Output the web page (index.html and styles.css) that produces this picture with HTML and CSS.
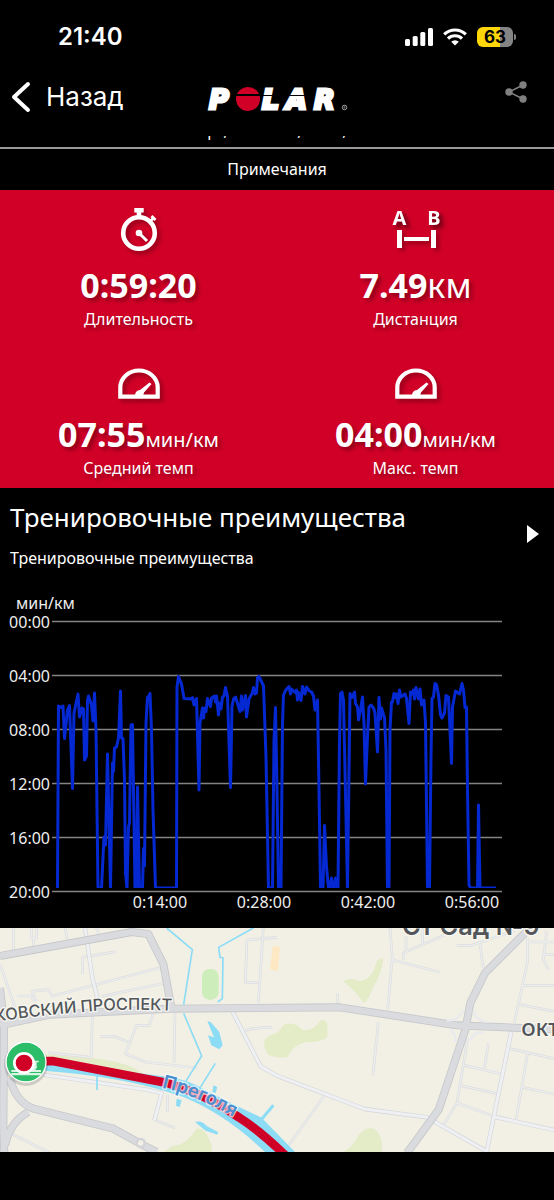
FILE: index.html
```
<!DOCTYPE html>
<html lang="ru">

<head>
  <meta charset="UTF-8">
  <meta name="viewport" content="width=device-width, initial-scale=1.0">
  <title>Тренировка</title>
  <link rel="stylesheet" href="styles.css">
</head>

<body>
  <div class="status-bar">
    <span class="time">21:40</span>
    <div class="status-icons">
      <svg width="28" height="18" viewBox="0 0 28 18" fill="#fff">
        <rect x="0" y="11" width="5" height="7" rx="1.5" />
        <rect x="7.7" y="8" width="5" height="10" rx="1.5" />
        <rect x="15.3" y="4" width="5" height="14" rx="1.5" />
        <rect x="23" y="0" width="5" height="18" rx="1.5" />
      </svg>
      <svg width="24" height="18" viewBox="0 0 24 18" fill="none" stroke="#fff" stroke-width="3.2">
        <path d="M1.2 6.4a15.4 15.4 0 0 1 21.6 0" />
        <path d="M5 10.6a10 10 0 0 1 14 0" />
        <path d="M12 17.6l-3.8-3.9a5.4 5.4 0 0 1 7.6 0z" fill="#fff" stroke="none" />
      </svg>
      <div class="battery"><span>63</span></div>
    </div>
  </div>

  <header class="nav">
    <button type="button" class="back">
      <svg width="20" height="32" viewBox="0 0 20 32" fill="none" stroke="#fff" stroke-width="4" stroke-linecap="round" stroke-linejoin="round">
        <path d="M17 3L3 16l14 13" />
      </svg>
      Назад
    </button>
    <svg class="logo" width="144" height="26" viewBox="0 0 144 26" role="img" aria-label="Polar">
      <g class="logo-text">
        <text x="4" y="23">P</text>
        <text x="57" y="23">L</text>
        <text x="81" y="23">A</text>
        <text x="109" y="23">R</text>
      </g>
      <circle cx="43" cy="13" r="12" fill="#d10027" />
      <rect x="30" y="8" width="26" height="2" fill="#000" />
      <rect x="56" y="9" width="50" height="1" fill="#000" />
      <circle cx="139.500" cy="21.500" r="2.300" fill="none" stroke="#999" />
      <path d="M139 22.800v-2.500h1v2.500" fill="none" stroke="#999" stroke-width=".6" />
    </svg>
    <button type="button" class="share" aria-label="Поделиться">
      <svg width="22" height="22" viewBox="0 0 22 22" fill="#808080">
        <path d="M18 4L4 11l14 7" fill="none" stroke="#808080" stroke-width="1.5" />
        <circle cx="18" cy="4" r="3.700" />
        <circle cx="4" cy="11" r="3.700" />
        <circle cx="18" cy="18" r="3.700" />
      </svg>
    </button>
  </header>

  <main>
    <div class="date">Четверг, Июль 10, 2025, 20:36</div>
    <div class="notes">Примечания</div>

    <section class="metrics">
      <div class="metric">
        <svg class="metric-icon" width="44" height="44" viewBox="0 0 44 44">
          <circle cx="22" cy="26" r="15.800" fill="none" stroke="#fff" stroke-width="4.600" />
          <path d="M17.300 1h9.400v4.600h-2.400V9h-4.600V5.600h-2.400z" fill="#fff" />
          <path d="M32.500 13l2-2-1-1 2-2 4 4-2 2-1-1-2 2z" fill="#fff" />
          <circle cx="22" cy="26" r="3.300" fill="#fff" />
          <path d="M22 26l8 8" stroke="#fff" stroke-width="3" />
        </svg>
        <div class="value">0:59:20</div>
        <div class="label">Длительность</div>
      </div>
      <div class="metric">
        <svg class="metric-icon" width="50" height="44" viewBox="0 0 50 44" fill="#fff">
          <text class="ab" x="8.500" y="18" text-anchor="middle">A</text>
          <text class="ab" x="43" y="18" text-anchor="middle">B</text>
          <path d="M6 23h5v18H6zM40 23h5v18h-5zM13 30h25v4H13z" />
        </svg>
        <div class="value">7.49<span class="unit-big">км</span></div>
        <div class="label">Дистанция</div>
      </div>
      <div class="metric">
        <svg class="metric-icon" width="44" height="44" viewBox="0 0 44 44">
          <path d="M3.300 40.700V31.500a18.700 17 0 0 1 37.400 0v9.200z" fill="none" stroke="#fff" stroke-width="4.200" />
          <path d="M18 40c0-4 2-5.500 5-6l9.500-7.500 2 1.500-7.500 8.500-1 3.500z" fill="#fff" />
        </svg>
        <div class="value">07:55<span class="unit">мин/км</span></div>
        <div class="label">Средний темп</div>
      </div>
      <div class="metric">
        <svg class="metric-icon" width="44" height="44" viewBox="0 0 44 44">
          <path d="M3.300 40.700V31.500a18.700 17 0 0 1 37.400 0v9.200z" fill="none" stroke="#fff" stroke-width="4.200" />
          <path d="M18 40c0-4 2-5.500 5-6l9.500-7.500 2 1.500-7.500 8.500-1 3.500z" fill="#fff" />
        </svg>
        <div class="value">04:00<span class="unit">мин/км</span></div>
        <div class="label">Макс. темп</div>
      </div>
    </section>

    <section class="benefit">
      <div>
        <h2>Тренировочные преимущества</h2>
        <p>Тренировочные преимущества</p>
      </div>
      <button type="button" class="play" aria-label="Открыть">
        <svg width="12" height="18" viewBox="0 0 12 18"><path d="M0 0l12 9-12 9z" fill="#fff" /></svg>
      </button>
    </section>

    <svg class="chart" viewBox="0 0 554 338" role="img" aria-label="Темп">
      <path d="M52 31.500H502M52 85.500H502M52 139.500H502M52 193.500H502M52 247.500H502M52 301.500H502" stroke="#848484" stroke-width="1.500" />
      <g class="chart-labels">
        <text x="16" y="19">мин/км</text>
        <text x="50" y="38" text-anchor="end">00:00</text>
        <text x="50" y="92" text-anchor="end">04:00</text>
        <text x="50" y="146" text-anchor="end">08:00</text>
        <text x="50" y="200" text-anchor="end">12:00</text>
        <text x="50" y="254" text-anchor="end">16:00</text>
        <text x="50" y="308" text-anchor="end">20:00</text>
        <text x="160" y="318" text-anchor="middle">0:14:00</text>
        <text x="264" y="318" text-anchor="middle">0:28:00</text>
        <text x="368" y="318" text-anchor="middle">0:42:00</text>
        <text x="472" y="318" text-anchor="middle">0:56:00</text>
      </g>
      <clipPath id="plot"><rect x="52" y="0" width="450" height="298" /></clipPath>
      <polyline clip-path="url(#plot)" fill="none" stroke="#0428d2" stroke-width="3" stroke-linejoin="round" points="
        57.5,298 58.5,116 61,117.5 63,116 64.5,148.5 67.5,120 69.5,115.5 72.5,198.5 74,123 78,104 79.5,127 82,118 83.5,119
        84.5,170 86.5,166 87.5,110 88.5,106 91.5,115 93,131 94.5,103 96,140 98,298 101.5,298 104,247 105.5,255 107.5,164
        110.5,298 112.5,173 113.5,181.5 114.5,158 116.5,157 118.5,148 120.5,101 121.5,148 123,148.5 124.5,190 125.5,283
        127,298 128.5,237 129.5,233 131,135 132.5,134.5 135,298 136.5,298 137.5,197 139.5,298 142.5,298 143.5,258.5
        144.5,276 146,133 147.5,107 148.5,107 150,103.5 151.5,140 153,220 155.5,298 176.5,298 177,97 178.5,86.5 181.5,94
        184,108.5 191.5,109 192.5,107.5 194,115 196.5,108.5 199,200 200,133 202.5,118 203.5,128 204.5,118 206,121.5
        207.5,108.5 210.5,116.5 211.5,108 214.5,106 215.5,112 216.5,106 218.5,125 219.5,113 221,119 222.5,107 224,106
        225.5,97.5 227.5,106 230.5,197.5 232,116.5 233.5,109 235.5,107 240,121.5 241.5,106 242.5,120 245.5,105.5
        246.5,127 249,109 252.5,102.5 253.5,97.5 255,104 256.5,103 257.5,87.5 259,86.5 263.5,96 266,167 268.5,298
        272.5,298 274,150 275.5,117.5 277,200 278.5,298 281,298 282.5,133 283.5,105 285.5,100.5 289,96.5 290.5,104
        291.5,99 295,102.5 296.5,100 297.5,110 298.5,102.5 301,110.5 302.5,96.5 305,104 306.5,97 309.5,101 311.5,102
        313.5,106 315,120 316.5,119 317.5,110 319,200 320.5,298 323,298 324.5,235.5 326.5,277 328.5,298 330,298
        331.5,288 332.5,298 334,297 335.5,288 337,298 338,298 339.5,150 340.5,103.5 342,102 343.5,110 347.5,298
        350,103.5 352,107.5 354.5,102 355.5,113.5 357.5,117 358.5,130 360.5,120 362.5,107 364,133 365.5,194 367.5,147
        369,117 371,115 373.5,118 375,123 377.5,162 379,107.5 380.5,129 381.5,118 384.5,128 386,160 387.5,298 389,298
        390,140 391.5,112 392.5,112 394,103.5 395.5,107.5 396.5,104 398,113.5 399.5,100 401,107 405,104 406.5,108.5
        409,133.5 410.5,102 412,104 413.5,100 414.5,109 416,97.5 418.5,109 420,99 421.5,115 424,110 425.5,133 427.5,298
        429.5,298 431,167 432,108.5 433.5,107 435,93.5 436.5,94.5 438.5,105 440.5,125 442,128 444.5,123 446,105.5
        448.5,107 451.5,173.5 452.5,117 455.5,101 459.5,104 462,93.5 463.5,100 465,117.5 466.5,117 467.5,200 469,295
        470.5,298 477.5,298 478.5,215 480,298 496,298" />
    </svg>

    <svg class="map" viewBox="0 0 1662 672" role="img" aria-label="Карта">
      <defs>
        <path id="avenue" d="M-131 297Q110 262 250 252Q380 239 580 252" />
        <path id="river" d="M485 480Q600 502 740 592" />
      </defs>
      <rect width="1662" height="672" fill="#f2f0e4" />

      <!-- parks -->
      <g fill="#e3ebc7">
        <path d="M1030 160q20-15 50 0 40-8 50-60 15-15 20-5-12 60-30 80-15 45-28 50-25-35-62-65z" />
        <path d="M792 340q10-20 40-25l20-25q30-12 55 15 30 8 55-28 20-5 20 20v30q-15 15-60 15-40 5-60 45-25 5-55-5-15-15-15-42z" />
        <path d="M490 672l30-20q30 5 70-50 25-5 45 50v20zM1030 672q30-15 45-50 25-30 50-18 25 20 20 68z" />
        <path d="M10 370q120 10 260 20 120 10 170 55L150 430z" />
      </g>
      <rect x="606" y="123" width="50" height="92" rx="22" fill="#cdeebb" />
      <path d="M818 54l22 2-6 74-24-6z" fill="#fde8c4" />

      <!-- small streets -->
      <g class="street-edge">
        <path id="small" d="M40 0v70M95 0v30h15V0M100 30v30M195 0l8 40M290 0l5 20M0 108l45 130M52 204h42l8 14M110 220l-15-30 50-5 12 20 328-87M305 205l190-40M248 138V88l100-17M277 255l-3 133-130-14M300 325h42l48 20M460 255l-12 37h-38l-34 85 60 25 156 18M525 255l-3 150M790 0l-15 225M831 28l-90 8-5 128h40M735 310q20-12 80-12M502 500v52M30 615l120 60M465 575l60 25M1170 0l7 90-14 155M1177 95l142 38M1218 25v50M1210 95v-20l150-65M1268 0v50M1370 52h45l130-45M1440 50l10 70M1583 30v70l-40 185M1583 42h79M1640 10l-10 85 15 30M1632 80h30M1013 196v40M1135 282l-16 160M972 505L862 658M1403 330l-32 195-40 65M1393 412l113 26M1382 473l110 24M1371 525l110 40M1465 345l-12 78M1530 362l132 30M1583 375l-35 202M1568 478l94 20M1560 230l102 20M1563 173h99" />
      </g>
      <use href="#small" class="street" />

      <!-- medium streets -->
      <g class="mid-edge">
        <path id="mid" d="M255 0l22 150 18 70M130 440l310 45 45 10-22 82M697 250l85 165 49 28 262 100 188 25 182 104M1535 305l-75 365M1480 566l182 40" />
      </g>
      <use href="#mid" class="mid" />

      <!-- main roads -->
      <g class="road-edge">
        <path id="main" d="M0 84l395-72 50 6 45 90 25 135M0 292L150 260l360-18 510-4 350 54 292 12M1590 0l-135 135-44 90-15 80-80 240-95 130M0 180l12 110-2 310 3 75M30 450q15 70 70 92l240 60 90 50 40 20M15 652q15-70 70-100" />
      </g>
      <use href="#main" class="road" />
      <path d="M1340 278q35 0 50-30M1420 250q5 24 40 32M1350 308q22 10 14 34M1450 312q-32 2-40 26" fill="none" stroke="#e9eaee" stroke-width="7" />
      <circle cx="422" cy="645" r="12" fill="#f2f0e4" stroke="#d3d4d9" stroke-width="8" />

      <!-- water -->
      <g fill="none" stroke="#8cdcf6" stroke-width="5">
        <path d="M500 0l77 65-26 165M551 256l54 128-50 80M760 0L656 58l4 30 9 2-2 122-14 10M646 406l-45 72M291 440v46" />
        <path d="M820 532l-35 42" stroke-width="9" />
      </g>
      <path d="M22 370l118 28 360 48q70 10 115 40l110 55 60 28 100 103H795q-120-115-245-165-170-60-410-78z" fill="#8cdcf6" />
      <path d="M622 280l10 2 26 30 10 40-10 12-24-12-10-30 18 6zM585 582q20-5 35 12l34 18-2 8-35-12zM640 472l12 5-5 18-10-3zM530 512l15 5-6 20-11-4z" fill="#8cdcf6" />

      <!-- track -->
      <path d="M78 400l80-1 340 65q120 35 220 105 60 38 140 115" fill="none" stroke="#d10027" stroke-width="26" />
      <path d="M210 410l200 45M720 572q60 40 110 95" fill="none" stroke="#b7092c" stroke-width="2" />

      <g class="map-labels">
        <text class="label-avenue"><textPath href="#avenue">МОСКОВСКИЙ ПРОСПЕКТ</textPath></text>
        <text class="label-river"><textPath href="#river">Преголя</textPath></text>
        <text class="label-garden" x="1206" y="20">Ст Сад №9</text>
        <text class="label-oct" x="1564" y="323">ОКТЯ</text>
      </g>

      <!-- start marker -->
      <circle cx="78" cy="408" r="66" fill="#000" opacity=".15" />
      <circle cx="78" cy="402" r="60" fill="#2cbd69" stroke="#fff" stroke-width="4" />
      <path d="M34 426h26l8-10h44l-6 10h17v6H34zM34 435h89v7H34zM98 398h18v5h-6v14h-12z" fill="#d9f3e4" />
      <circle cx="72" cy="405" r="29" fill="#d10027" stroke="#fff" stroke-width="8" />
    </svg>
  </main>
</body>

</html>
```
FILE: styles.css
```
body {
  margin: 0;
  min-height: 100vh;
  background-color: #000;
  color: #fff;
  font-family: "Noto Sans", sans-serif;
  font-size: 16px;
  line-height: 20px;
}

button {
  background: none;
  border: none;
  padding: 0;
  color: #fff;
  cursor: pointer;
}

svg {
  display: block;
}

.status-bar {
  display: flex;
  justify-content: space-between;
  align-items: center;
  height: 74px;
  padding: 0 41px 0 58px;
  font-family: Inter, sans-serif;
}

.time {
  font-size: 24px;
  font-weight: 600;
}

.status-icons {
  display: flex;
  align-items: center;
  gap: 10px;
}

.battery {
  position: relative;
  width: 36px;
  height: 20px;
  border-radius: 6px;
  background: linear-gradient(to right, #ffd60a 63%, #848484 63%);
  color: #000;
  font-size: 17px;
  font-weight: 700;
  text-align: center;
}

.battery::after {
  content: "";
  position: absolute;
  left: 37px;
  top: 7px;
  width: 2px;
  height: 6px;
  border-radius: 0 2px 2px 0;
  background: #848484;
}

.nav {
  display: grid;
  grid-template-columns: 1fr auto 1fr;
  align-items: start;
  height: 50px;
  padding: 7px 27px 5px 11px;
}

.back {
  display: flex;
  align-items: center;
  gap: 15px;
  font-family: Inter, sans-serif;
  font-size: 26px;
  line-height: 32px;
}

.logo {
  margin: 5px 0 0 16px;
  overflow: visible;
}

.logo-text {
  font-family: "DejaVu Sans", sans-serif;
  font-size: 27px;
  font-weight: 700;
  font-style: italic;
  fill: #fff;
  stroke: #fff;
  stroke-width: 3px;
}

.share {
  justify-self: end;
}

.date {
  display: flex;
  flex-direction: column;
  justify-content: flex-end;
  box-sizing: border-box;
  height: 11px;
  padding-bottom: 7px;
  overflow: hidden;
  text-align: center;
}

.notes {
  border-top: 2px solid #999;
  padding: 10px 0 11px;
  text-align: center;
}

.metrics {
  display: grid;
  grid-template-columns: 1fr 1fr;
  background-color: #d10027;
}

.metric {
  display: flex;
  flex-direction: column;
  align-items: center;
  padding: 17px 0 10px;
  text-shadow: 3px 3px 4px rgba(0, 0, 0, 0.35);
}

.metric-icon {
  overflow: visible;
  filter: drop-shadow(3px 3px 2px rgba(0, 0, 0, 0.3));
}

.ab {
  font-size: 20px;
  font-weight: 700;
}

.value {
  margin: 14px 0 4px;
  font-size: 34px;
  font-weight: 700;
  line-height: 40px;
}

.unit,
.unit-big {
  font-weight: 400;
}

.unit {
  font-size: 20px;
  line-height: 20px;
}

.benefit {
  display: flex;
  justify-content: space-between;
  align-items: center;
  padding: 11px 15px 22px 10px;
}

.benefit h2 {
  margin: 0 0 13px;
  font-size: 26px;
  font-weight: 400;
  line-height: 36px;
}

.benefit p {
  margin: 0;
}

.chart {
  width: 100%;
}

.chart-labels {
  fill: #eee;
  font-size: 16px;
}

.map {
  width: 100%;
}

.street-edge,
.street,
.mid-edge,
.mid,
.road-edge,
.road {
  fill: none;
  stroke-linejoin: round;
}

.street-edge {
  stroke: #dcdddd;
  stroke-width: 8px;
}

.street {
  stroke: #ecedee;
  stroke-width: 4px;
}

.mid-edge {
  stroke: #d3d5d9;
  stroke-width: 13px;
}

.mid {
  stroke: #eff0f4;
  stroke-width: 9px;
}

.road-edge {
  stroke: #c5c6ca;
  stroke-width: 24px;
}

.road {
  stroke: #dadbdf;
  stroke-width: 19px;
}

.map-labels {
  font-family: Inter, sans-serif;
  fill: #52565a;
  stroke: #f7f6f0;
  stroke-width: 8px;
  stroke-linejoin: round;
  paint-order: stroke;
}

.label-avenue {
  font-size: 49px;
  font-weight: 500;
}

.label-river {
  font-size: 56px;
  font-weight: 600;
  fill: #4b8fd0;
  stroke: rgba(255, 255, 255, 0.7);
}

.label-garden {
  font-size: 76px;
  font-weight: 600;
}

.label-oct {
  font-family: "Noto Sans", sans-serif;
  font-size: 56px;
  font-weight: 600;
}
```
